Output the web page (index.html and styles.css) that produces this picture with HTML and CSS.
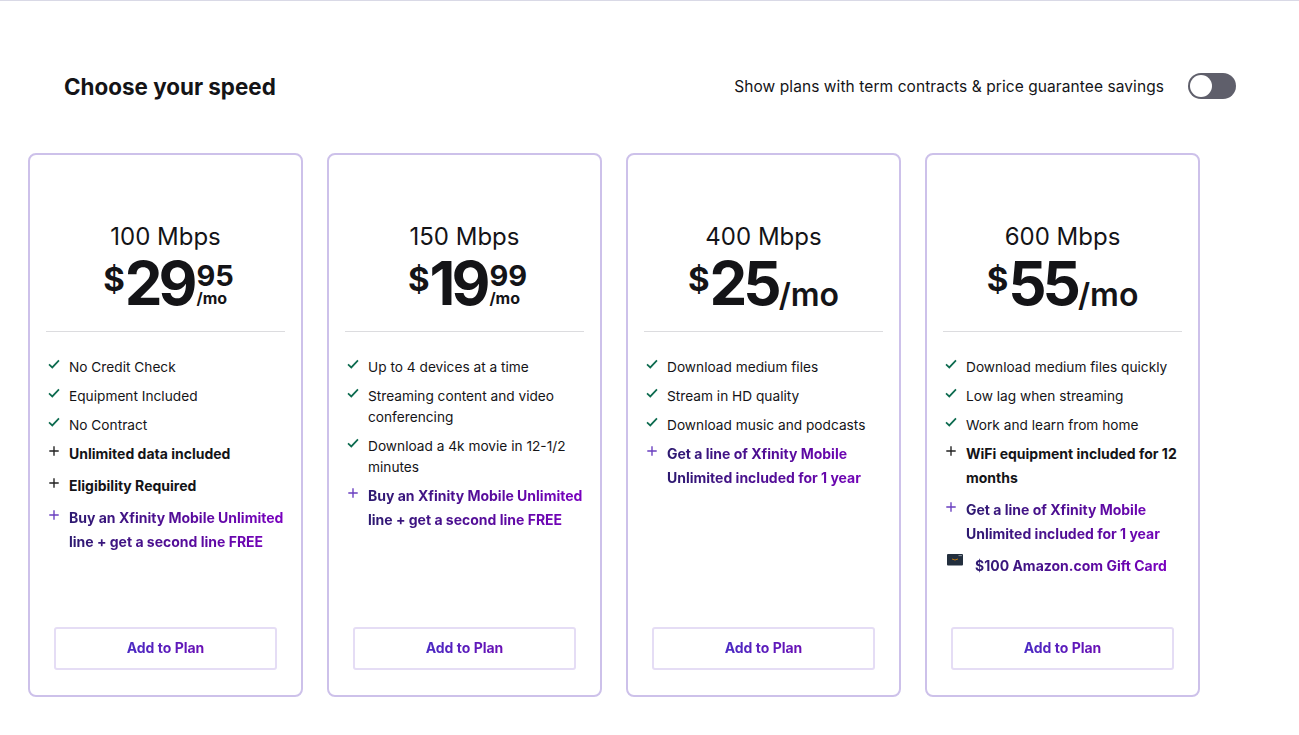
FILE: index.html
```html
<!DOCTYPE html>
<html>
<head>
    <title>Choose your speed</title>
    <link rel="stylesheet" href="styles.css">
</head>
<body>
    <svg class="defs" width="0" height="0">
        <symbol id="check" viewBox="0 0 14 14"><path d="M1.2 7.5 L5 11 L12.8 2.8" fill="none" stroke="currentColor" stroke-width="2"/></symbol>
        <symbol id="plus" viewBox="0 0 14 14"><path d="M7 1.5 V12.5 M1.5 7 H12.5" fill="none" stroke="currentColor" stroke-width="1.6"/></symbol>
    </svg>
    <div class="page">
        <div class="top-row">
            <h1>Choose your speed</h1>
            <div class="term-toggle">
                <span>Show plans with term contracts &amp; price guarantee savings</span>
                <div class="switch"><div class="knob"></div></div>
            </div>
        </div>
        <div class="plans">
            <div class="plan">
                <div class="plan-head">
                    <div class="speed">100 Mbps</div>
                    <div class="price"><span class="dollar">$</span><span class="amount">29</span><span class="cents"><span class="cents-num">95</span><span class="per">/mo</span></span></div>
                </div>
                <ul class="features">
                    <li class="reg"><svg class="ico green"><use href="#check"/></svg><span>No Credit Check</span></li>
                    <li class="reg"><svg class="ico green"><use href="#check"/></svg><span>Equipment Included</span></li>
                    <li class="reg"><svg class="ico green"><use href="#check"/></svg><span>No Contract</span></li>
                    <li class="bold"><svg class="ico dark"><use href="#plus"/></svg><span>Unlimited data included</span></li>
                    <li class="bold"><svg class="ico dark"><use href="#plus"/></svg><span>Eligibility Required</span></li>
                    <li class="bold"><svg class="ico violet"><use href="#plus"/></svg><span class="promo">Buy an Xfinity Mobile Unlimited line + get a second line FREE</span></li>
                </ul>
                <button type="button" class="add-btn"><span>Add to Plan</span></button>
            </div>
            <div class="plan">
                <div class="plan-head">
                    <div class="speed">150 Mbps</div>
                    <div class="price"><span class="dollar">$</span><span class="amount">19</span><span class="cents"><span class="cents-num">99</span><span class="per">/mo</span></span></div>
                </div>
                <ul class="features">
                    <li class="reg"><svg class="ico green"><use href="#check"/></svg><span>Up to 4 devices at a time</span></li>
                    <li class="reg"><svg class="ico green"><use href="#check"/></svg><span>Streaming content and video conferencing</span></li>
                    <li class="reg"><svg class="ico green"><use href="#check"/></svg><span>Download a 4k movie in 12-1/2 minutes</span></li>
                    <li class="bold"><svg class="ico violet"><use href="#plus"/></svg><span class="promo">Buy an Xfinity Mobile Unlimited line + get a second line FREE</span></li>
                </ul>
                <button type="button" class="add-btn"><span>Add to Plan</span></button>
            </div>
            <div class="plan">
                <div class="plan-head">
                    <div class="speed">400 Mbps</div>
                    <div class="price"><span class="dollar">$</span><span class="amount">25</span><span class="per-big">/mo</span></div>
                </div>
                <ul class="features">
                    <li class="reg"><svg class="ico green"><use href="#check"/></svg><span>Download medium files</span></li>
                    <li class="reg"><svg class="ico green"><use href="#check"/></svg><span>Stream in HD quality</span></li>
                    <li class="reg"><svg class="ico green"><use href="#check"/></svg><span>Download music and podcasts</span></li>
                    <li class="bold"><svg class="ico violet"><use href="#plus"/></svg><span class="promo">Get a line of Xfinity Mobile Unlimited included for 1 year</span></li>
                </ul>
                <button type="button" class="add-btn"><span>Add to Plan</span></button>
            </div>
            <div class="plan">
                <div class="plan-head">
                    <div class="speed">600 Mbps</div>
                    <div class="price"><span class="dollar">$</span><span class="amount">55</span><span class="per-big">/mo</span></div>
                </div>
                <ul class="features">
                    <li class="reg"><svg class="ico green"><use href="#check"/></svg><span>Download medium files quickly</span></li>
                    <li class="reg"><svg class="ico green"><use href="#check"/></svg><span>Low lag when streaming</span></li>
                    <li class="reg"><svg class="ico green"><use href="#check"/></svg><span>Work and learn from home</span></li>
                    <li class="bold"><svg class="ico dark"><use href="#plus"/></svg><span>WiFi equipment included for 12 months</span></li>
                    <li class="bold"><svg class="ico violet"><use href="#plus"/></svg><span class="promo">Get a line of Xfinity Mobile Unlimited included for 1 year</span></li>
                    <li class="bold gift">
                        <svg class="gift-card" viewBox="0 0 16 12"><rect width="16" height="11.5" rx="1" fill="#232f3e"/><rect x="11.5" y="1.2" width="3.4" height="0.9" fill="#9aa3ad"/><path d="M5 5 Q8 7 11 5" fill="none" stroke="#ff9900" stroke-width="0.7"/></svg>
                        <span class="promo">$100 Amazon.com Gift Card</span>
                    </li>
                </ul>
                <button type="button" class="add-btn"><span>Add to Plan</span></button>
            </div>
        </div>
    </div>
</body>
</html>
```

FILE: styles.css
```css
html, body {
    margin: 0;
    padding: 0;
    background: #fff;
}

body {
    font-family: "Inter", "Noto Sans", sans-serif;
    color: #141417;
    height: 735px;
    overflow: hidden;
}

.defs {
    position: absolute;
}

.page {
    border-top: 1px solid #d9d9e6;
    padding: 0 63px 0 28px;
}

.top-row {
    display: flex;
    justify-content: space-between;
    align-items: center;
    height: 152px;
    padding-left: 36px;
    padding-top: 18px;
    box-sizing: border-box;
}

h1 {
    margin: 0;
    font-size: 22.4px;
    font-weight: 700;
}

.term-toggle {
    display: flex;
    align-items: center;
    gap: 24px;
    font-size: 15.5px;
    letter-spacing: 0.08px;
}

.switch {
    width: 48px;
    height: 26px;
    background: #5f5f6b;
    border-radius: 13px;
    padding: 2px;
    box-sizing: border-box;
}

.knob {
    width: 22px;
    height: 22px;
    background: #fff;
    border-radius: 50%;
}

.plans {
    display: flex;
    gap: 24px;
}

.plan {
    width: 275px;
    height: 544px;
    box-sizing: border-box;
    border: 2px solid #cdc1ea;
    border-radius: 8px;
    padding: 0 16px;
    display: flex;
    flex-direction: column;
}

.plan-head {
    height: 177px;
    box-sizing: border-box;
    padding-top: 67px;
    border-bottom: 1px solid #dcdcdf;
    text-align: center;
}

.speed {
    font-size: 24px;
    line-height: 30px;
}

.price {
    display: flex;
    justify-content: center;
    align-items: flex-start;
    font-weight: 700;
    height: 66px;
    margin-top: -2px;
}

.dollar {
    font-size: 33px;
    line-height: 46px;
    margin-top: 6px;
}

.amount {
    font-size: 60px;
    line-height: 66px;
    letter-spacing: -4px;
}

.cents {
    display: flex;
    flex-direction: column;
    align-items: flex-start;
    margin-left: 3px;
    margin-right: -6px;
    margin-top: 12px;
}

.cents-num {
    font-size: 29px;
    line-height: 28px;
}

.per {
    font-size: 16px;
    line-height: 16px;
}

.per-big {
    font-size: 32px;
    font-weight: 600;
    line-height: 32px;
    margin-top: 29px;
    margin-left: 1px;
}

.features {
    list-style: none;
    margin: 0;
    padding: 25px 0 0 2px;
    flex: 1;
    font-size: 14px;
}

.features li {
    display: flex;
    align-items: flex-start;
    gap: 9px;
}

.reg {
    font-size: 13.7px;
    line-height: 21px;
    margin-bottom: 8px;
}

.bold {
    line-height: 24px;
    margin-bottom: 8px;
    font-weight: 700;
}

.reg + .bold {
    margin-top: -2px;
}

.ico {
    width: 12px;
    height: 12px;
    flex: none;
    margin-top: 1px;
}

.bold .ico {
    margin-top: 3px;
}

.green {
    color: #0d6b4f;
}

.dark {
    color: #222;
}

.violet {
    color: #6a3fc0;
}

.promo {
    background: linear-gradient(90deg, #2d1a70, #7a00c0);
    -webkit-background-clip: text;
    background-clip: text;
    color: transparent;
}

.features .gift {
    gap: 12px;
}

.gift-card {
    width: 16px;
    height: 12px;
    flex: none;
    margin-left: 2px;
}

.add-btn {
    width: 223px;
    height: 43px;
    margin: 0 0 25px 8px;
    padding: 0 0 2px;
    background: #fff;
    border: 2px solid #e5ddf5;
    border-radius: 3px;
    font-family: inherit;
    font-size: 14px;
    font-weight: 700;
    flex: none;
}

.add-btn span {
    background: linear-gradient(90deg, #4b2bc4, #6a10b5);
    -webkit-background-clip: text;
    background-clip: text;
    color: transparent;
}
```
